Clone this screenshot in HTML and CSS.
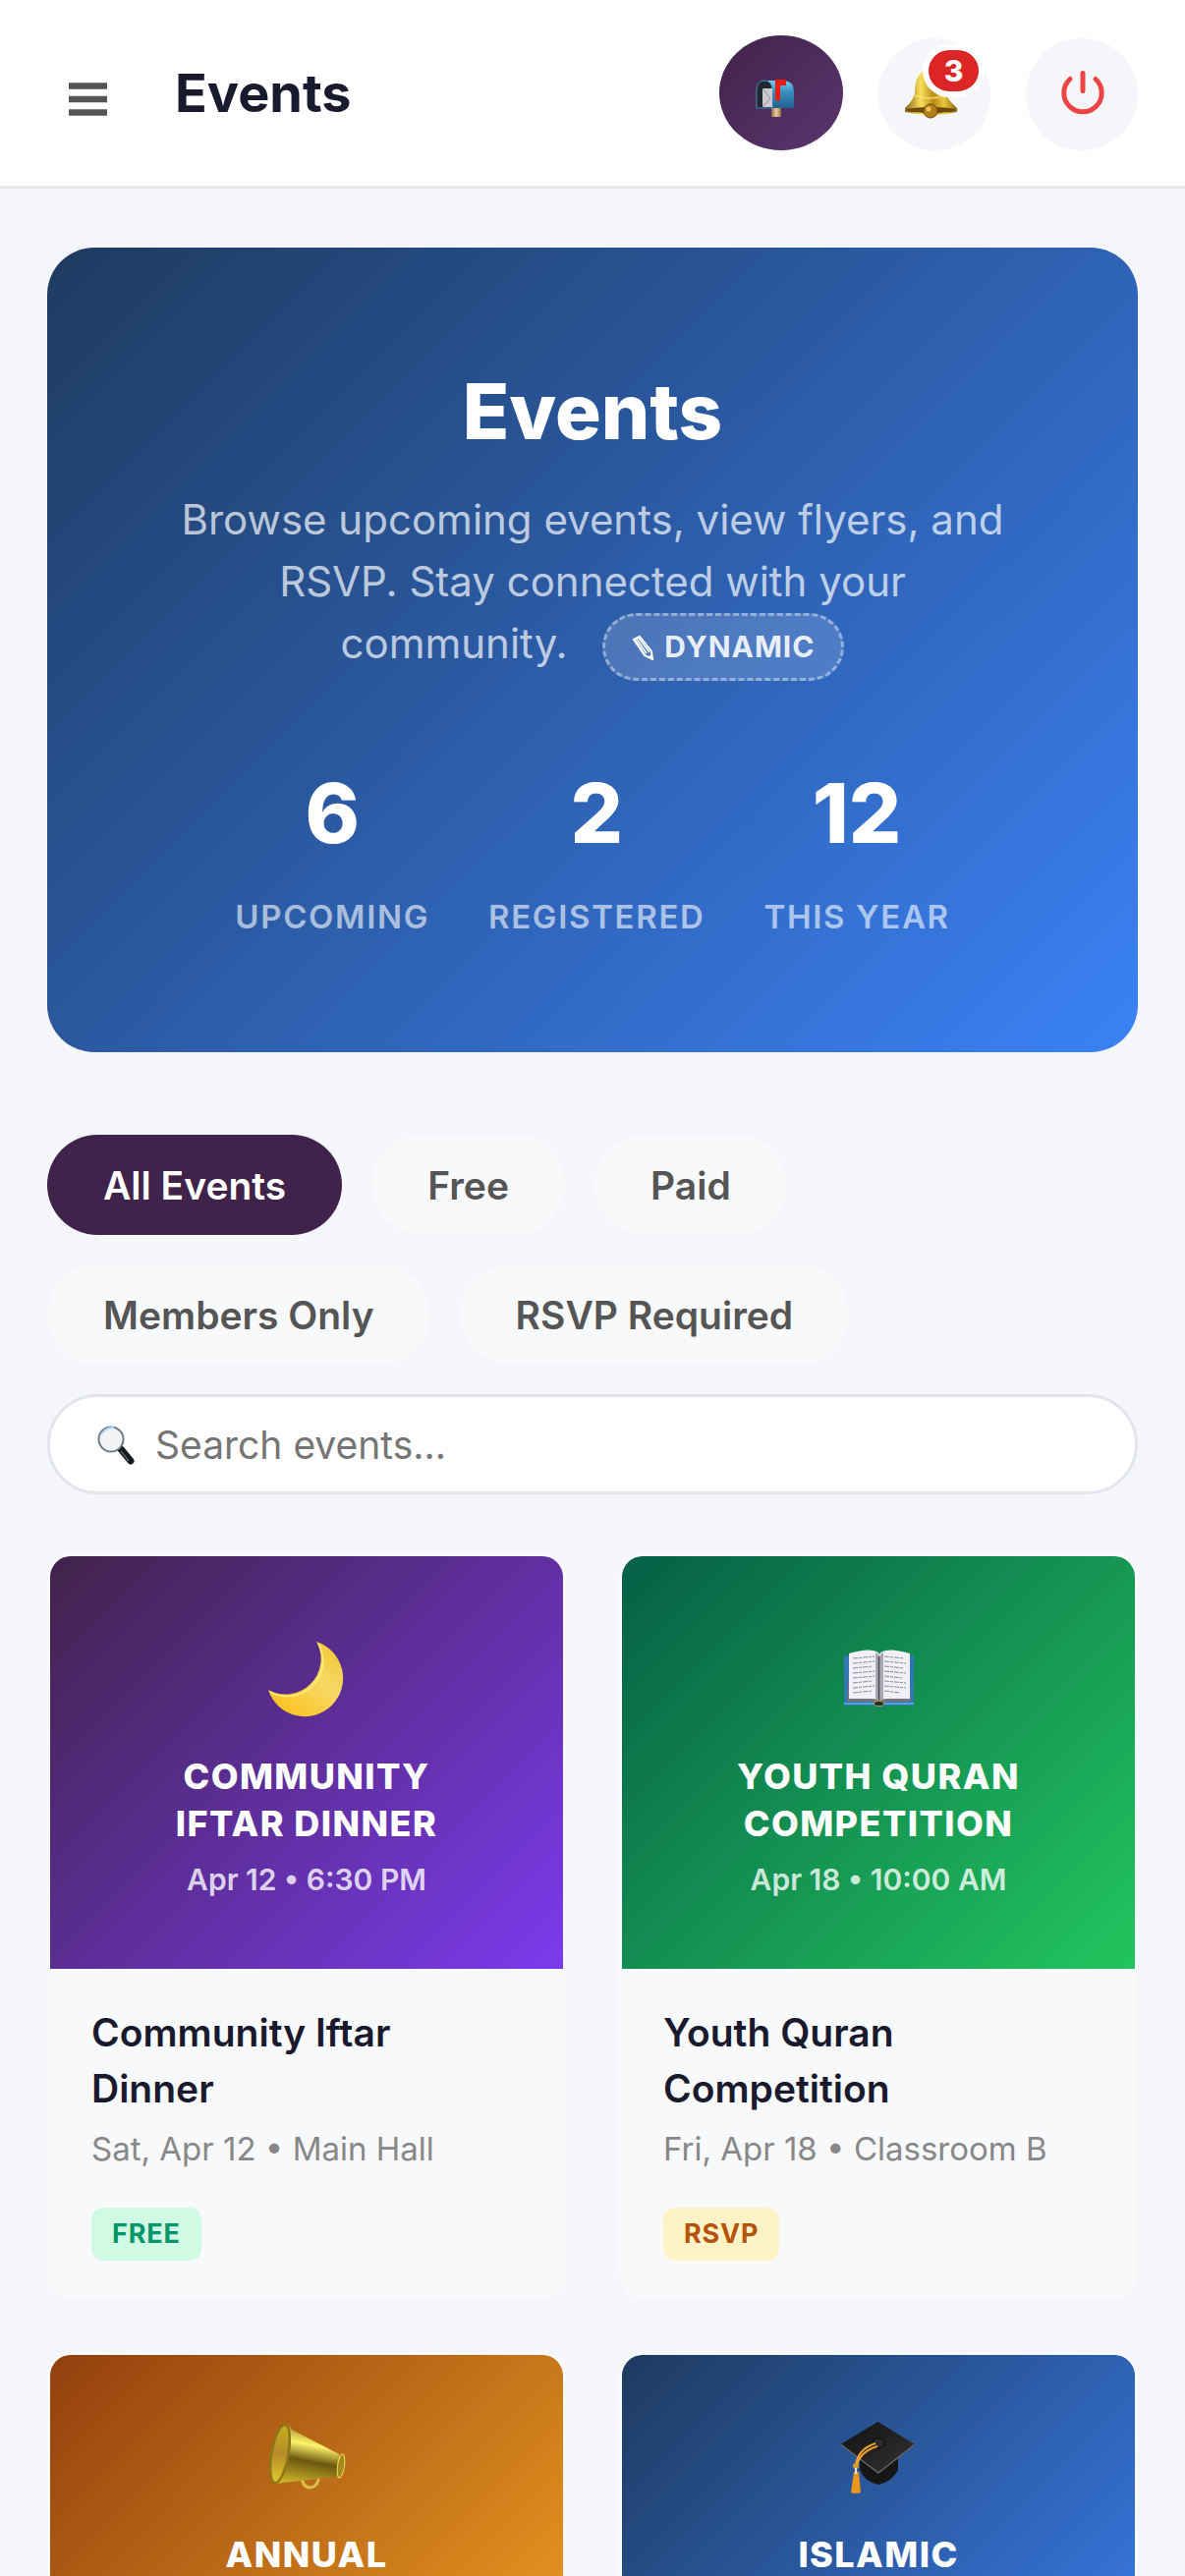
FILE: index.html
```html
<!DOCTYPE html>
<html lang="en">
<head>
    <meta charset="UTF-8">
    <meta name="viewport" content="width=device-width, initial-scale=1.0">
    <title>Events</title>
    <link rel="stylesheet" href="styles.css">
</head>
<body>

<!-- Top bar -->
<header class="topbar">
    <button class="menu-button" aria-label="Open menu">
        <svg viewBox="0 0 84 84" aria-hidden="true">
            <path d="M22 34.5h39M22 48h39M22 61.5h39" stroke="#555" stroke-width="6.5"/>
        </svg>
    </button>
    <div class="topbar-title">Events</div>
    <div class="topbar-actions">
        <button class="icon-button inbox-button" aria-label="Inbox">
            <svg viewBox="0 0 60 60" aria-hidden="true">
                <defs>
                    <linearGradient id="box" x1="0" y1="0" x2="0" y2="1">
                        <stop offset="0" stop-color="#6fd0ee"/>
                        <stop offset=".4" stop-color="#3a8fc0"/>
                        <stop offset="1" stop-color="#20608f"/>
                    </linearGradient>
                    <linearGradient id="post" x1="0" y1="0" x2="1" y2="0">
                        <stop offset="0" stop-color="#8a6a45"/>
                        <stop offset=".5" stop-color="#ecd09c"/>
                        <stop offset="1" stop-color="#8a6a45"/>
                    </linearGradient>
                </defs>
                <path d="M20 43h10v11H20z" fill="url(#post)"/>
                <path d="M12 17h22q9 1 9 12v16H12z" fill="url(#box)"/>
                <path d="M5 45V28q0-11 8-11t8 11v17z" fill="#22272d" stroke="#3c8cb8"/>
                <path d="M11 25h10v19H11z" fill="#c9cbce"/>
                <path d="M11 25l8 10-8 9" fill="none" stroke="#8b8e93"/>
                <path d="M24 16h11v6h-6v14q-2 4-5 0z" fill="#ea1d0c"/>
            </svg>
        </button>
        <button class="icon-button" aria-label="Notifications, 3 unread">
            <svg viewBox="0 0 60 60" aria-hidden="true">
                <defs>
                    <linearGradient id="bell" x1="0" y1="0" x2="1" y2="0">
                        <stop offset="0" stop-color="#8a6414"/>
                        <stop offset=".3" stop-color="#fbdf5a"/>
                        <stop offset=".55" stop-color="#b98c17"/>
                        <stop offset=".75" stop-color="#e9c73e"/>
                        <stop offset="1" stop-color="#8b6512"/>
                    </linearGradient>
                </defs>
                <path d="M18 7q9-3 17 2 6 5 6 20 4 8 12 15v4q-27 6-53 0v-4q8-7 10-15 0-17 8-22z" fill="url(#bell)"/>
                <ellipse cx="26.5" cy="46" rx="25" ry="3" fill="#6b4a0b"/>
                <path d="M9 31q16 6 33 0" fill="none" stroke="#ffe672" stroke-width="2" opacity=".6"/>
                <circle cx="26" cy="47" r="7" fill="#b37f1d" stroke="#6f4b0c"/>
                <circle cx="24" cy="45" r="2.5" fill="#f0c552"/>
            </svg>
            <span class="count">3</span>
        </button>
        <button class="icon-button" aria-label="Log out">
            <svg viewBox="0 0 60 60" aria-hidden="true">
                <path d="M18 14.5a19.2 19.2 0 1 0 26 0M31 8.500v18" fill="none" stroke="#ef4444" stroke-width="5" stroke-linecap="round"/>
            </svg>
        </button>
    </div>
</header>

<main class="page">

    <!-- Hero -->
    <section class="hero">
        <h1>Events</h1>
        <p>Browse upcoming events, view flyers, and RSVP. Stay connected with your community.
            <span class="dynamic"><svg viewBox="0 0 24 26" aria-hidden="true"><path d="M2 5l6-3 12 15 1 8-8-4z" fill="none" stroke="#fff" stroke-width="2"/><path d="M4 3l11 16M6 2l12 16M3 5l10 15" fill="none" stroke="#fff" stroke-width="1.5"/><path d="M17 22l4-2v5z" fill="#fff"/></svg>DYNAMIC</span>
        </p>
        <div class="stats">
            <div class="stat">
                <div class="stat-number">6</div>
                <div class="stat-label">UPCOMING</div>
            </div>
            <div class="stat">
                <div class="stat-number">2</div>
                <div class="stat-label">REGISTERED</div>
            </div>
            <div class="stat">
                <div class="stat-number">12</div>
                <div class="stat-label">THIS YEAR</div>
            </div>
        </div>
    </section>

    <!-- Filters and search -->
    <div class="filters">
        <button class="filter active">All Events</button>
        <button class="filter">Free</button>
        <button class="filter">Paid</button>
        <button class="filter">Members Only</button>
        <button class="filter">RSVP Required</button>
        <label class="search">
            <svg viewBox="0 0 42 42" aria-hidden="true">
                <path d="M27 26l10 12" stroke="#14171c" stroke-width="7" stroke-linecap="round"/>
                <path d="M27 28l8 10" stroke="#59616b" stroke-width="1.5"/>
                <circle cx="17" cy="16" r="12.5" fill="#f3f4f6" stroke="#6e7a86" stroke-width="2"/>
                <path d="M7 11q5-8 13-7" fill="none" stroke="#a9d4f5" stroke-width="2"/>
            </svg>
            <input type="text" placeholder="Search events..." aria-label="Search events">
        </label>
    </div>

    <!-- Event cards -->
    <div class="events">
        <article class="card">
            <div class="flyer purple">
                <svg viewBox="0 0 108 108" aria-hidden="true">
                    <defs>
                        <linearGradient id="moon" x1="1" y1="0" x2="0.3" y2="1">
                            <stop offset="0" stop-color="#f2c32d"/>
                            <stop offset=".5" stop-color="#f6d866"/>
                            <stop offset="1" stop-color="#fbc322"/>
                        </linearGradient>
                    </defs>
                    <path d="M64 16A39 39 0 1 1 15 65A36 36 0 0 0 64 16z" fill="url(#moon)"/>
                    <path d="M66 18A36 36 0 0 1 17 67" fill="none" stroke="#fff07a" stroke-width="1.5"/>
                </svg>
                <div class="flyer-title">COMMUNITY IFTAR DINNER</div>
                <div class="flyer-date">Apr 12 • 6:30 PM</div>
            </div>
            <div class="card-body">
                <h3>Community Iftar Dinner</h3>
                <p>Sat, Apr 12 • Main Hall</p>
                <span class="tag free">FREE</span>
            </div>
        </article>

        <article class="card">
            <div class="flyer green">
                <svg viewBox="0 0 108 108" aria-hidden="true">
                    <path d="M19 30h71v51H61q-6 3-13 0H19z" fill="#2f78b5"/>
                    <path d="M19 79h71" stroke="#62b2e8" stroke-width="1.5"/>
                    <path d="M22 77l3-49h59l3 49H61l-6 3-7-3z" fill="#77757a"/>
                    <path d="M24 28q20-6 28-2 3 1 3 4v46q-3-2-8-2H24z" fill="#f1eff7"/>
                    <path d="M86 28q-20-6-28-2-3 1-3 4v46q3-2 8-2h23z" fill="#f1eff7"/>
                    <path d="M51 27q4 2 4 5v44l-4-2zM59 27q-4 2-4 5v44l4-2z" fill="#aaa8b2"/>
                    <path d="M54.5 31v45" stroke="#4c4a50" stroke-width="1.5"/>
                    <path d="M28 33l22-2M28 38l22-2M28 43l20-2M28 48l22-2M28 53l22-2M28 58l20-2M28 63l22-2M28 68l20-2M60 31l20 2M60 36l22 2M60 41l20 2M60 46l22 2M60 51l18 2M60 56l22 2M60 61l22 2M60 66l16 2" stroke="#8c8a94" stroke-dasharray="5 1 3 1"/>
                    <ellipse cx="54.5" cy="79" rx="5" ry="2.5" fill="#1c2d34" stroke="#c59a30"/>
                </svg>
                <div class="flyer-title">YOUTH QURAN COMPETITION</div>
                <div class="flyer-date">Apr 18 • 10:00 AM</div>
            </div>
            <div class="card-body">
                <h3>Youth Quran Competition</h3>
                <p>Fri, Apr 18 • Classroom B</p>
                <span class="tag rsvp">RSVP</span>
            </div>
        </article>

        <article class="card">
            <div class="flyer orange">
                <svg viewBox="0 0 108 108" aria-hidden="true">
                    <defs>
                        <linearGradient id="horn" x1=".6" y1="0" x2=".4" y2="1">
                            <stop offset="0" stop-color="#7d6a14"/>
                            <stop offset=".35" stop-color="#fff36a"/>
                            <stop offset=".62" stop-color="#6b560e"/>
                            <stop offset="1" stop-color="#c9b02a"/>
                        </linearGradient>
                        <linearGradient id="mouth" x1="0" y1="0" x2="0" y2="1">
                            <stop offset="0" stop-color="#c9ae1c"/>
                            <stop offset=".5" stop-color="#b58a2a"/>
                            <stop offset="1" stop-color="#e2cb28"/>
                        </linearGradient>
                    </defs>
                    <path d="M49 74q1 11 9 11 8-1 9-13" fill="none" stroke="#d8c04a" stroke-width="3"/>
                    <path d="M34 20q3 1 5 6l48 25q4 12-2 23L22 81z" fill="url(#horn)"/>
                    <ellipse cx="27" cy="50.5" rx="8.5" ry="30" transform="rotate(10 27 50.5)" fill="url(#mouth)" stroke="#8d7617" stroke-width="2.5"/>
                    <ellipse cx="89" cy="63" rx="3.5" ry="12" transform="rotate(8 89 63)" fill="#a48b1e" stroke="#efdd5b"/>
                </svg>
                <div class="flyer-title">ANNUAL FUNDRAISER</div>
                <div class="flyer-date">Saturday, Apr 26 • 6:00 PM</div>
            </div>
            <div class="card-body">
                <h3>Annual Fundraiser</h3>
                <p>Sat, Apr 26 • Main Hall</p>
                <span class="tag rsvp">RSVP</span>
            </div>
        </article>

        <article class="card">
            <div class="flyer blue">
                <svg viewBox="0 0 108 108" aria-hidden="true">
                    <defs>
                        <linearGradient id="cap" x1="0" y1="0" x2="1" y2="1">
                            <stop offset="0" stop-color="#111"/>
                            <stop offset="1" stop-color="#333"/>
                        </linearGradient>
                    </defs>
                    <path d="M35 53v14q6 13 19 15 14-3 20-15V53z" fill="#161616"/>
                    <path d="M15.5 41L53.5 18 91 41 54 70z" fill="url(#cap)"/>
                    <path d="M15.5 41L54 70 91 41" fill="none" stroke="#666" stroke-width="1.5"/>
                    <ellipse cx="54" cy="40" rx="6" ry="5" fill="#2c2c2f" stroke="#080808"/>
                    <path d="M51 40Q33 46 31 62M53 43Q36 48 32 62" fill="none" stroke="#f0a32b" stroke-width="2"/>
                    <circle cx="31" cy="63" r="3" fill="#e39622"/>
                    <path d="M29 69h5l2 21q-5 2-10 0z" fill="#e8961c"/>
                    <path d="M31 65v6" stroke="#dfe6ea" stroke-width="2"/>
                </svg>
                <div class="flyer-title">ISLAMIC CONFERENCE</div>
                <div class="flyer-date">Saturday, May 3 • 10:00 AM</div>
            </div>
            <div class="card-body">
                <h3>Islamic Conference</h3>
                <p>Sat, May 3 • Main Hall</p>
                <span class="tag free">FREE</span>
            </div>
        </article>
    </div>
</main>

</body>
</html>
```
FILE: styles.css
```css
* {
    box-sizing: border-box;
}

body {
    font-family: Inter, "Liberation Sans", sans-serif;
    background-color: #f4f6fa;
    color: #1a1a2e;
    margin: 0;
}

button, input {
    font-family: inherit;
}

h1, h3, p {
    margin: 0;
}

/* Top bar */
.topbar {
    display: flex;
    align-items: center;
    padding: 36px 48px;
    background-color: #fff;
    border-bottom: 3px solid #e8e8ee;
}

.menu-button {
    width: 84px;
    height: 84px;
    padding: 0;
    border: none;
    background: none;
    cursor: pointer;
}

.menu-button svg {
    display: block;
}

.topbar-title {
    margin-left: 46px;
    font-size: 54px;
    font-weight: 700;
}

.topbar-actions {
    display: flex;
    align-items: flex-end;
    gap: 36px;
    margin-left: auto;
}

.icon-button {
    position: relative;
    display: flex;
    align-items: center;
    justify-content: center;
    width: 114px;
    height: 114px;
    padding: 0;
    border: none;
    border-radius: 50%;
    background-color: #f4f6fa;
    cursor: pointer;
}

.icon-button svg {
    width: 60px;
    height: 60px;
}

.inbox-button {
    width: 126px;
    height: 117px;
    background: linear-gradient(135deg, #40234a, #5b356f);
}

.count {
    position: absolute;
    top: 6px;
    right: 6px;
    min-width: 63px;
    height: 54px;
    border: 6px solid #fff;
    border-radius: 27px;
    background-color: #dc2626;
    color: #fff;
    font-size: 30px;
    font-weight: 800;
    line-height: 42px;
}

.page {
    padding: 60px 48px;
}

/* Hero */
.hero {
    padding: 120px 84px 108px;
    border-radius: 48px;
    background: linear-gradient(135deg, #1e3a5f, #3b82f6);
    color: #fff;
    text-align: center;
}

.hero h1 {
    font-size: 78px;
    font-weight: 800;
    line-height: 93px;
    margin-bottom: 32px;
}

.hero p {
    max-width: 860px;
    margin: 0 auto;
    color: rgba(255, 255, 255, 0.7);
    font-size: 42px;
    line-height: 63px;
}

.dynamic {
    display: inline-flex;
    align-items: center;
    gap: 9px;
    height: 69px;
    margin-left: 24px;
    padding: 0 27px;
    border: 3px dashed rgba(255, 255, 255, 0.4);
    border-radius: 36px;
    background-color: rgba(255, 255, 255, 0.15);
    color: rgba(255, 255, 255, 0.9);
    font-size: 30px;
    font-weight: 700;
    letter-spacing: 1px;
    vertical-align: middle;
}

.dynamic svg {
    width: 24px;
    height: 26px;
}

.stats {
    display: flex;
    justify-content: center;
    gap: 60px;
    margin-top: 84px;
}

.stat-number {
    margin-bottom: 24px;
    font-size: 84px;
    font-weight: 800;
    line-height: 102px;
}

.stat-label {
    color: rgba(255, 255, 255, 0.6);
    font-size: 33px;
    font-weight: 600;
    letter-spacing: 0.05em;
    line-height: 60px;
}

/* Filters */
.filters {
    display: flex;
    flex-wrap: wrap;
    gap: 30px;
    margin: 84px 0 60px;
}

.filter {
    height: 102px;
    padding: 0 57px;
    border: none;
    border-radius: 51px;
    background-color: #f8f9fb;
    color: #555;
    font-size: 39px;
    font-weight: 600;
    cursor: pointer;
}

.filter.active {
    background-color: #40234a;
    color: #fff;
}

.search {
    display: flex;
    align-items: center;
    gap: 20px;
    width: 100%;
    height: 102px;
    padding: 0 45px;
    border: 3px solid #e2e5eb;
    border-radius: 51px;
    background-color: #fff;
}

.search svg {
    width: 42px;
    height: 42px;
}

.search input {
    flex: 1;
    padding: 0;
    border: none;
    outline: none;
    background: none;
    font-size: 39px;
}

.search input::placeholder {
    color: #757575;
}

/* Event cards */
.events {
    display: grid;
    grid-template-columns: 1fr 1fr;
    gap: 54px;
}

.card {
    overflow: hidden;
    border: 3px solid #f8f9fb;
    border-radius: 24px;
    background-color: #f8f9fb;
}

.flyer {
    display: flex;
    flex-direction: column;
    align-items: center;
    justify-content: center;
    height: 420px;
    padding: 0 90px;
    color: #fff;
    text-align: center;
}

.flyer svg {
    width: 108px;
    height: 108px;
    margin-bottom: 21px;
}

.flyer-title {
    margin-bottom: 12px;
    font-size: 36px;
    font-weight: 800;
    letter-spacing: 0.04em;
    line-height: 48px;
}

.flyer-date {
    color: rgba(255, 255, 255, 0.8);
    font-size: 30px;
    font-weight: 600;
    line-height: 42px;
}

.purple {
    background: linear-gradient(135deg, #40234a, #7c3aed);
}

.green {
    background: linear-gradient(135deg, #065f46, #22c55e);
}

.orange {
    background: linear-gradient(135deg, #92400e, #f5a524);
}

.blue {
    background: linear-gradient(135deg, #1e3a5f, #3b82f6);
}

.card-body {
    padding: 36px 42px;
}

.card-body h3 {
    font-size: 39px;
    font-weight: 600;
    line-height: 57px;
}

.card-body p {
    margin: 9px 0 36px;
    color: #888;
    font-size: 33px;
    line-height: 48px;
}

.tag {
    display: block;
    width: fit-content;
    padding: 0 21px;
    border-radius: 12px;
    font-size: 27px;
    font-weight: 700;
    letter-spacing: 0.03em;
    line-height: 54px;
}

.free {
    background-color: #d1fae5;
    color: #059669;
}

.rsvp {
    background-color: #fef3c7;
    color: #b45309;
}
```
